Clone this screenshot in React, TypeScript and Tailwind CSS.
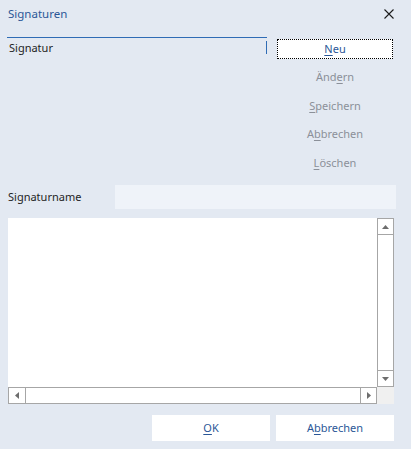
import React from 'react';

// Dialog "Signaturen" – Outlook-artiger Dialog
const U = ({ children }: { children: React.ReactNode }) => <span className="underline underline-offset-2">{children}</span>;

const SideButton = ({ children }: { children: React.ReactNode }) => (
  <div className="h-[20px] flex items-center justify-center text-[#8b9099]">{children}</div>
);

const Arrow = ({ dir }: { dir: 'up' | 'down' | 'left' | 'right' }) => {
  const pts: Record<string, string> = {
    up: '0,4 3.5,0 7,4',
    down: '0,0 3.5,4 7,0',
    left: '4,0 0,3.5 4,7',
    right: '0,0 4,3.5 0,7',
  };
  const vertical = dir === 'up' || dir === 'down';
  return (
    <svg width={vertical ? 7 : 4} height={vertical ? 4 : 7} viewBox={vertical ? '0 0 7 4' : '0 0 4 7'}>
      <polygon points={pts[dir]} fill="#6d6d6d" />
    </svg>
  );
};

export default function App() {
  return (
    <div
      className="w-[411px] h-[449px] bg-[#e3e9f2] text-[11px] text-[#1e1e1e] overflow-hidden flex flex-col"
      style={{ fontFamily: '"Noto Sans", "Open Sans", sans-serif' }}
    >
      {/* Titelzeile */}
      <div className="h-[28px] flex items-center justify-between pl-[8px] pr-[17px]">
        <span className="text-[#2b5797] text-[11.5px]">Signaturen</span>
        <svg width="10" height="10" viewBox="0 0 10 10">
          <path d="M0.5 0.5 L9.5 9.5 M9.5 0.5 L0.5 9.5" stroke="#1b1b1b" strokeWidth="1.1" />
        </svg>
      </div>

      {/* Liste + Schaltflächen */}
      <div className="flex mt-[9px] h-[139px]">
        <div className="ml-[7px] w-[260px] border-t border-[#2f6cb5]">
          <div className="flex items-start h-[20px]">
            <span className="pl-[2px] pt-[2px] flex-1">Signatur</span>
            <span className="w-px h-[13px] bg-[#2f6cb5] mt-[3px]"></span>
          </div>
        </div>
        <div className="ml-[10px] w-[116px] flex flex-col gap-[8.5px] mt-[2px]">
          <div className="h-[20px] bg-white border border-dotted border-black flex items-center justify-center text-[#2b5797]">
            <span><U>N</U>eu</span>
          </div>
          <SideButton><span>Änd<U>e</U>rn</span></SideButton>
          <SideButton><span><U>S</U>peichern</span></SideButton>
          <SideButton><span>A<U>b</U>brechen</span></SideButton>
          <SideButton><span><U>L</U>öschen</span></SideButton>
        </div>
      </div>

      {/* Signaturname */}
      <div className="flex items-center mt-[9px] h-[24px]">
        <span className="pl-[8px] w-[115px] pt-[1px]">Signaturname</span>
        <div className="w-[281px] h-[24px] bg-[#eff3f9]"></div>
      </div>

      {/* Editor mit Scrollleisten */}
      <div className="ml-[8px] mt-[9px] w-[386px] h-[186px] bg-white flex flex-col">
        <div className="flex flex-1">
          <div className="flex-1"></div>
          <div className="w-[17px] flex flex-col border border-[#a6a6a6]">
            <div className="h-[16px] border-b border-[#a6a6a6] flex items-center justify-center"><Arrow dir="up" /></div>
            <div className="flex-1"></div>
            <div className="h-[16px] border-t border-[#a6a6a6] flex items-center justify-center"><Arrow dir="down" /></div>
          </div>
        </div>
        <div className="flex h-[17px]">
          <div className="flex-1 flex border border-[#a6a6a6]">
            <div className="w-[17px] border-r border-[#a6a6a6] flex items-center justify-center"><Arrow dir="left" /></div>
            <div className="flex-1"></div>
            <div className="w-[16px] border-l border-[#a6a6a6] flex items-center justify-center"><Arrow dir="right" /></div>
          </div>
          <div className="w-[17px] bg-[#f0f0f0]"></div>
        </div>
      </div>

      {/* OK / Abbrechen */}
      <div className="flex justify-end gap-[6px] mt-[11px] pr-[17px]">
        <div className="w-[118px] h-[26px] bg-white flex items-center justify-center text-[#2b5797]">
          <span><U>O</U>K</span>
        </div>
        <div className="w-[118px] h-[26px] bg-white flex items-center justify-center text-[#2b5797]">
          <span>A<U>b</U>brechen</span>
        </div>
      </div>
    </div>
  );
}
